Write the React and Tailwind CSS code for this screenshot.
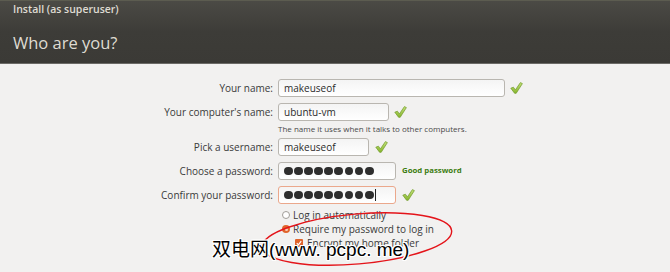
import React from "react";

const Check = () => (
  <svg width="13" height="12" viewBox="0 0 13 12" className="shrink-0">
    <defs>
      <linearGradient id="cg" x1="0" y1="0" x2="0" y2="1">
        <stop offset="0" stopColor="#c3e07a" />
        <stop offset="1" stopColor="#86b52c" />
      </linearGradient>
    </defs>
    <path
      d="M0.8 6.2 L3.4 5.2 L5.4 7.9 L10.4 0.6 L12.4 1.6 L6.2 11.3 L4.6 11.3 Z"
      fill="url(#cg)"
      stroke="#6f9a25"
      strokeWidth="0.7"
      strokeLinejoin="round"
    />
  </svg>
);

const Dots = ({ n }) => (
  <div className="flex items-center gap-[1.3px]">
    {Array.from({ length: n }).map((_, i) => (
      <div key={i} className="w-[8.8px] h-[8.8px] rounded-full bg-[#2e2e2e]" />
    ))}
  </div>
);

const Label = ({ children }) => (
  <div className="w-[278px] pr-[5px] text-right shrink-0 text-[#3a3a3a]">{children}</div>
);

const inputBase =
  "h-[18px] rounded-[3px] bg-gradient-to-b from-[#f4f4f4] to-white flex items-center px-[5px] shrink-0";

export default function App() {
  return (
    <div
      className="relative w-[670px] h-[272px] overflow-hidden bg-[#f2f1f0] text-[10px]"
      style={{ fontFamily: '"Open Sans", "DejaVu Sans", sans-serif' }}
    >
      {/* Header */}
      <div className="h-[64px] bg-gradient-to-b from-[#4b4a45] via-[#3d3c38] to-[#3b3a36] border-t border-[#5c5c50] border-b border-b-[#6b6a66] px-[13px] text-[#dfdbd2]">
        <div className="pt-[1px] text-[10.5px] font-semibold leading-[14px]">Install (as superuser)</div>
        <div className="mt-[16px] text-[16.5px] leading-[22px]">Who are you?</div>
      </div>

      {/* Form */}
      <div className="pt-[15px] flex flex-col leading-none">
        <div className="flex items-center h-[18px]">
          <Label>Your name:</Label>
          <div className={`${inputBase} w-[227px] border border-[#b9b6b0] text-[#2b2b2b]`}>makeuseof</div>
          <div className="ml-[5px]"><Check /></div>
        </div>
        <div className="flex items-center h-[18px] mt-[6px]">
          <Label>Your computer's name:</Label>
          <div className={`${inputBase} w-[111px] border border-[#b9b6b0] text-[#2b2b2b]`}>ubuntu-vm</div>
          <div className="ml-[5px]"><Check /></div>
        </div>
        <div className="pl-[278px] mt-[2px] h-[11px] text-[8px] text-[#4a4a4a] leading-[11px]">
          The name it uses when it talks to other computers.
        </div>
        <div className="flex items-center h-[18px] mt-[4px]">
          <Label>Pick a username:</Label>
          <div className={`${inputBase} w-[91px] border border-[#b9b6b0] text-[#2b2b2b]`}>makeuseof</div>
          <div className="ml-[6px]"><Check /></div>
        </div>
        <div className="flex items-center h-[18px] mt-[6px]">
          <Label>Choose a password:</Label>
          <div className={`${inputBase} w-[118px] border border-[#b9b6b0]`}><Dots n={9} /></div>
          <div className="ml-[6px] text-[7.8px] font-bold text-[#3d7d12]">Good password</div>
        </div>
        <div className="flex items-center h-[18px] mt-[6px]">
          <Label>Confirm your password:</Label>
          <div className={`${inputBase} w-[118px] border border-[#eba88c]`}>
            <Dots n={9} />
            <div className="w-[1px] h-[12px] bg-[#222] ml-[1px]" />
          </div>
          <div className="ml-[6px]"><Check /></div>
        </div>

        <div className="pl-[282px] mt-[4px] flex flex-col text-[#3a3a3a]">
          <div className="flex items-center h-[14px]">
            <div className="w-[8px] h-[8px] rounded-full border border-[#a09d98] bg-white" />
            <span className="ml-[3px]">Log in automatically</span>
          </div>
          <div className="flex items-center h-[14px]">
            <div className="w-[8px] h-[8px] rounded-full bg-[#e0642c] flex items-center justify-center">
              <div className="w-[3px] h-[3px] rounded-full bg-[#f8d2bc]" />
            </div>
            <span className="ml-[3px]">Require my password to log in</span>
          </div>
          <div className="flex items-center h-[14px] pl-[13px]">
            <div className="w-[8px] h-[8px] rounded-[1px] bg-[#e0642c] flex items-center justify-center">
              <svg width="6" height="6" viewBox="0 0 6 6">
                <path d="M0.8 3.2 L2.4 4.8 L5.2 1.2" stroke="#fff" strokeWidth="1.2" fill="none" />
              </svg>
            </div>
            <span className="ml-[4px]">Encrypt my home folder</span>
          </div>
        </div>
      </div>

      {/* Annotation overlay */}
      <svg className="absolute left-0 top-0 pointer-events-none" width="670" height="272">
        <ellipse
          cx="357"
          cy="239"
          rx="95"
          ry="25"
          transform="rotate(-5 357 239)"
          fill="none"
          stroke="#e4141a"
          strokeWidth="1.4"
        />
      </svg>
      <div
        className="absolute left-[212px] top-[238px] text-[19px] leading-[24px] text-black whitespace-nowrap"
        style={{
          fontFamily: '"Liberation Sans", "Noto Sans CJK SC", sans-serif',
          textShadow:
            "1px 0 0 #fff, -1px 0 0 #fff, 0 1px 0 #fff, 0 -1px 0 #fff, 1px 1px 0 #fff, -1px -1px 0 #fff, 1px -1px 0 #fff, -1px 1px 0 #fff",
        }}
      >
        双电网(www. pcpc. me)
      </div>
    </div>
  );
}
